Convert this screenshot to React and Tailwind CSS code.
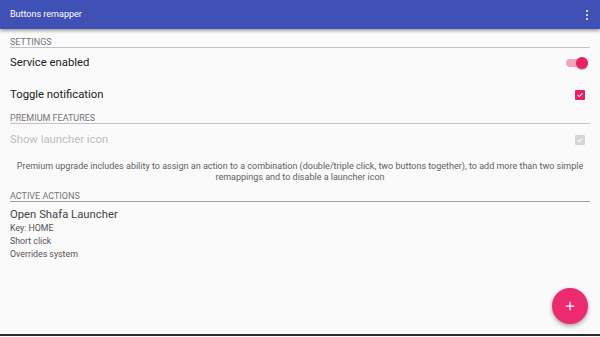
import React, { useState } from 'react';

const SectionHeader = ({ title, line = 'border-[#cdb9d1]' }) => (
  <div className={`mx-[10px] border-b ${line} text-[9px] leading-[10px] text-[#757575] uppercase`}>
    {title}
  </div>
);

const App = () => {
  const [enabled, setEnabled] = useState(true);
  const [notify, setNotify] = useState(true);

  return (
    <div className="relative h-[337px] w-[600px] overflow-hidden bg-[#fafafa]" style={{ fontFamily: 'Roboto, "Noto Sans", sans-serif' }}>
      {/* Toolbar */}
      <div className="relative z-10 flex h-[29px] items-center justify-between bg-[#3f51b5] pl-[10px] pr-[12px] shadow-[0_2px_3px_rgba(0,0,0,0.35)]">
        <span className="text-[9px] text-white">Buttons remapper</span>
        <div className="flex flex-col gap-[2px]">
          <span className="h-[2px] w-[2px] rounded-full bg-white"></span>
          <span className="h-[2px] w-[2px] rounded-full bg-white"></span>
          <span className="h-[2px] w-[2px] rounded-full bg-white"></span>
        </div>
      </div>

      {/* Settings */}
      <div className="pt-[8px]">
        <SectionHeader title="Settings" />
      </div>
      <div className="flex h-[30px] items-center justify-between pl-[10px] pr-[12px]" onClick={() => setEnabled(!enabled)}>
        <span className="text-[11.3px] text-[#212121]">Service enabled</span>
        <div className="relative h-[12px] w-[22px]">
          <div className={`absolute left-0 top-[2px] h-[8px] w-[20px] rounded-full ${enabled ? 'bg-[#f5a3c0]' : 'bg-[#bdbdbd]'}`}></div>
          <div className={`absolute top-0 h-[12px] w-[12px] rounded-full shadow-[0_1px_2px_rgba(0,0,0,0.3)] ${enabled ? 'left-[10px] bg-[#e91e63]' : 'left-0 bg-[#f1f1f1]'}`}></div>
        </div>
      </div>
      <div className="flex h-[34px] items-center justify-between pl-[10px] pr-[15px]" onClick={() => setNotify(!notify)}>
        <span className="text-[11.3px] text-[#212121]">Toggle notification</span>
        <div className={`flex h-[10px] w-[10px] items-center justify-center rounded-[1px] ${notify ? 'bg-[#e91e63]' : 'border border-[#757575]'}`}>
          {notify && (
            <svg viewBox="0 0 10 10" className="h-[8px] w-[8px]">
              <path d="M2 5.2 L4 7 L8 3" stroke="white" strokeWidth="1.3" fill="none" />
            </svg>
          )}
        </div>
      </div>

      {/* Premium */}
      <div className="pt-[1px]">
        <SectionHeader title="Premium features" />
      </div>
      <div className="flex h-[32px] items-center justify-between pl-[10px] pr-[15px]">
        <span className="text-[11.3px] text-[#bdbdbd]">Show launcher icon</span>
        <div className="flex h-[10px] w-[10px] items-center justify-center rounded-[1px] bg-[#d6d6d6]">
          <svg viewBox="0 0 10 10" className="h-[8px] w-[8px]">
            <path d="M2 5.2 L4 7 L8 3" stroke="white" strokeWidth="1.3" fill="none" />
          </svg>
        </div>
      </div>
      <div className="px-[10px] pt-[5px] text-center text-[9px] leading-[11px] text-[#616161]">
        Premium upgrade includes ability to assign an action to a combination (double/triple click, two buttons together), to add more than two simple
        <br />
        remappings and to disable a launcher icon
      </div>

      {/* Active actions */}
      <div className="pt-[8px]">
        <SectionHeader title="Active actions" line="border-[#9e9e9e]" />
      </div>
      <div className="px-[10px] pt-[6px]">
        <div className="text-[11.3px] leading-[14px] text-[#444]">Open Shafa Launcher</div>
        <div className="text-[8.8px] leading-[13px] text-[#555]">Key: HOME</div>
        <div className="text-[8.8px] leading-[13px] text-[#555]">Short click</div>
        <div className="text-[8.8px] leading-[13px] text-[#555]">Overrides system</div>
      </div>

      {/* FAB */}
      <button className="absolute bottom-[13px] right-[12px] flex h-[36px] w-[36px] items-center justify-center rounded-full bg-[#ec2a6f] shadow-[0_2px_4px_rgba(0,0,0,0.35)]">
        <svg viewBox="0 0 12 12" className="h-[10px] w-[10px]">
          <path d="M6 1 V11 M1 6 H11" stroke="white" strokeWidth="1.5" />
        </svg>
      </button>

      <div className="absolute bottom-[1px] left-0 h-[2px] w-full bg-[#2a2a2a]"></div>
    </div>
  );
};

export default App;
